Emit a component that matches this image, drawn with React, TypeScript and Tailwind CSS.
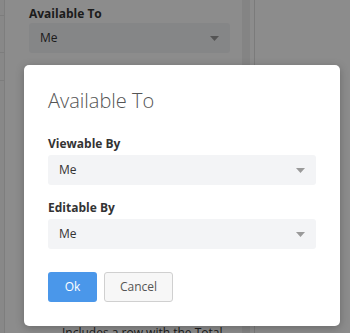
import { useState } from 'react';

function Caret() {
  return (
    <svg width="9" height="5" viewBox="0 0 9 5" className="shrink-0">
      <path d="M0 0h9L4.5 5z" fill="#9a9a9a" />
    </svg>
  );
}

function SelectBox({ value, className = '' }: { value: string; className?: string }) {
  return (
    <div
      className={`flex h-[30px] items-center justify-between rounded-[3px] bg-[#f3f4f6] pl-[11px] pr-[11px] text-[12px] text-[#333] ${className}`}
    >
      <span>{value}</span>
      <Caret />
    </div>
  );
}

export default function App() {
  const [viewable] = useState('Me');
  const [editable] = useState('Me');

  return (
    <div
      className="relative h-[333px] w-[350px] overflow-hidden bg-white"
      style={{ fontFamily: '"Open Sans", "Noto Sans", sans-serif' }}
    >
      {/* page underneath */}
      <div className="flex h-full">
        <div className="flex w-[5px] flex-col border-r border-[#e6e6e6] bg-[#f7f7f7]">
          <div className="h-[16px] border-b border-[#e3e3e3]" />
          <div className="h-[37px] border-b border-[#e3e3e3]" />
          <div className="h-[28px] border-b border-[#e3e3e3]" />
        </div>
        <div className="flex w-[237px] flex-col pl-[24px] pt-[6px]">
          <div className="text-[12px] font-bold leading-[16px] text-[#333]">Available To</div>
          <SelectBox value="Me" className="mt-[1px] w-[201px]" />
          <div className="mb-[-8px] mt-auto pl-[33px] text-[12px] leading-[16px] text-[#333]">
            Includes a row with the Total
          </div>
        </div>
        <div className="w-[8px] bg-[#f0f0f0]" />
        <div className="w-[4px]" />
        <div className="flex-1 border-l border-[#e0e0e0]" />
      </div>

      {/* overlay + modal */}
      <div className="absolute inset-0 bg-black/45" />
      <div className="absolute left-[24px] top-[65px] w-[316px] rounded-[5px] bg-white px-[24px] pb-[24px] pt-[22px] shadow-[0_2px_8px_rgba(0,0,0,0.25)]">
        <h2 className="text-[20px] font-light leading-[28px] text-[#555]">Available To</h2>

        <div className="mt-[21px] text-[12px] font-bold leading-[16px] text-[#333]">Viewable By</div>
        <SelectBox value={viewable} className="mt-[3px]" />

        <div className="mt-[15px] text-[12px] font-bold leading-[16px] text-[#333]">Editable By</div>
        <SelectBox value={editable} className="mt-[3px]" />

        <div className="mt-[23px] flex gap-[7px]">
          <button className="h-[30px] w-[49px] rounded-[3px] bg-[#4a97ea] text-[12px] text-white">Ok</button>
          <button className="h-[30px] w-[69px] rounded-[3px] border border-[#d0d0d0] bg-[#f7f7f7] text-[12px] text-[#555]">
            Cancel
          </button>
        </div>
      </div>
    </div>
  );
}
